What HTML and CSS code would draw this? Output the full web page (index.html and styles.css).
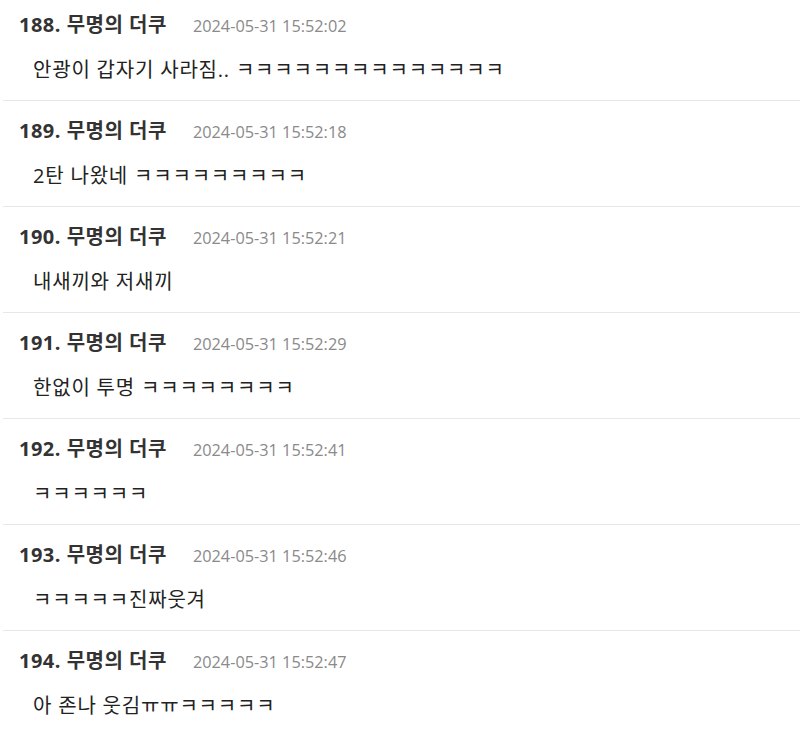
FILE: index.html
```html
<!DOCTYPE html>
<html>

<head>
  <meta charset="UTF-8">
  <meta name="viewport" content="width=device-width, initial-scale=1.0">
  <link rel="stylesheet" href="styles.css">
</head>

<body>
  <ul class="comment-list">
    <li class="comment">
      <div class="comment-head">
        <span class="comment-author">188. 무명의 더쿠</span>
        <span class="comment-date">2024-05-31 15:52:02</span>
      </div>
      <div class="comment-body">안광이 갑자기 사라짐.. ㅋㅋㅋㅋㅋㅋㅋㅋㅋㅋㅋㅋㅋㅋ</div>
    </li>
    <li class="comment">
      <div class="comment-head">
        <span class="comment-author">189. 무명의 더쿠</span>
        <span class="comment-date">2024-05-31 15:52:18</span>
      </div>
      <div class="comment-body">2탄 나왔네 ㅋㅋㅋㅋㅋㅋㅋㅋㅋ</div>
    </li>
    <li class="comment">
      <div class="comment-head">
        <span class="comment-author">190. 무명의 더쿠</span>
        <span class="comment-date">2024-05-31 15:52:21</span>
      </div>
      <div class="comment-body">내새끼와 저새끼</div>
    </li>
    <li class="comment">
      <div class="comment-head">
        <span class="comment-author">191. 무명의 더쿠</span>
        <span class="comment-date">2024-05-31 15:52:29</span>
      </div>
      <div class="comment-body">한없이 투명 ㅋㅋㅋㅋㅋㅋㅋㅋ</div>
    </li>
    <li class="comment">
      <div class="comment-head">
        <span class="comment-author">192. 무명의 더쿠</span>
        <span class="comment-date">2024-05-31 15:52:41</span>
      </div>
      <div class="comment-body">ㅋㅋㅋㅋㅋㅋ</div>
    </li>
    <li class="comment">
      <div class="comment-head">
        <span class="comment-author">193. 무명의 더쿠</span>
        <span class="comment-date">2024-05-31 15:52:46</span>
      </div>
      <div class="comment-body">ㅋㅋㅋㅋㅋ진짜웃겨</div>
    </li>
    <li class="comment">
      <div class="comment-head">
        <span class="comment-author">194. 무명의 더쿠</span>
        <span class="comment-date">2024-05-31 15:52:47</span>
      </div>
      <div class="comment-body">아 존나 웃김ㅠㅠㅋㅋㅋㅋㅋ</div>
    </li>
  </ul>
</body>

</html>
```

FILE: styles.css
```css
body {
  margin: 0;
  background-color: #fff;
  font-family: "Open Sans", "Noto Sans CJK KR", sans-serif;
  color: #333;
}

/* Lista de comentarios */
.comment-list {
  list-style: none;
  margin: -5px 0 0 3px;
  padding: 0;
}

.comment {
  padding: 17px 16px;
  border-bottom: 1px solid #e8e8e8;
}

.comment-head {
  display: flex;
  align-items: baseline;
  gap: 26px;
  height: 26px;
  line-height: 26px;
}

.comment-author {
  font-size: 20px;
  font-weight: bold;
  letter-spacing: 0.5px;
  color: #333;
}

.comment-date {
  font-size: 16.3px;
  color: #8a8a8a;
}

.comment-body {
  margin-top: 19px;
  padding-left: 14px;
  height: 26px;
  font-size: 20px;
  letter-spacing: 0.8px;
  line-height: 26px;
  color: #222;
}
```
